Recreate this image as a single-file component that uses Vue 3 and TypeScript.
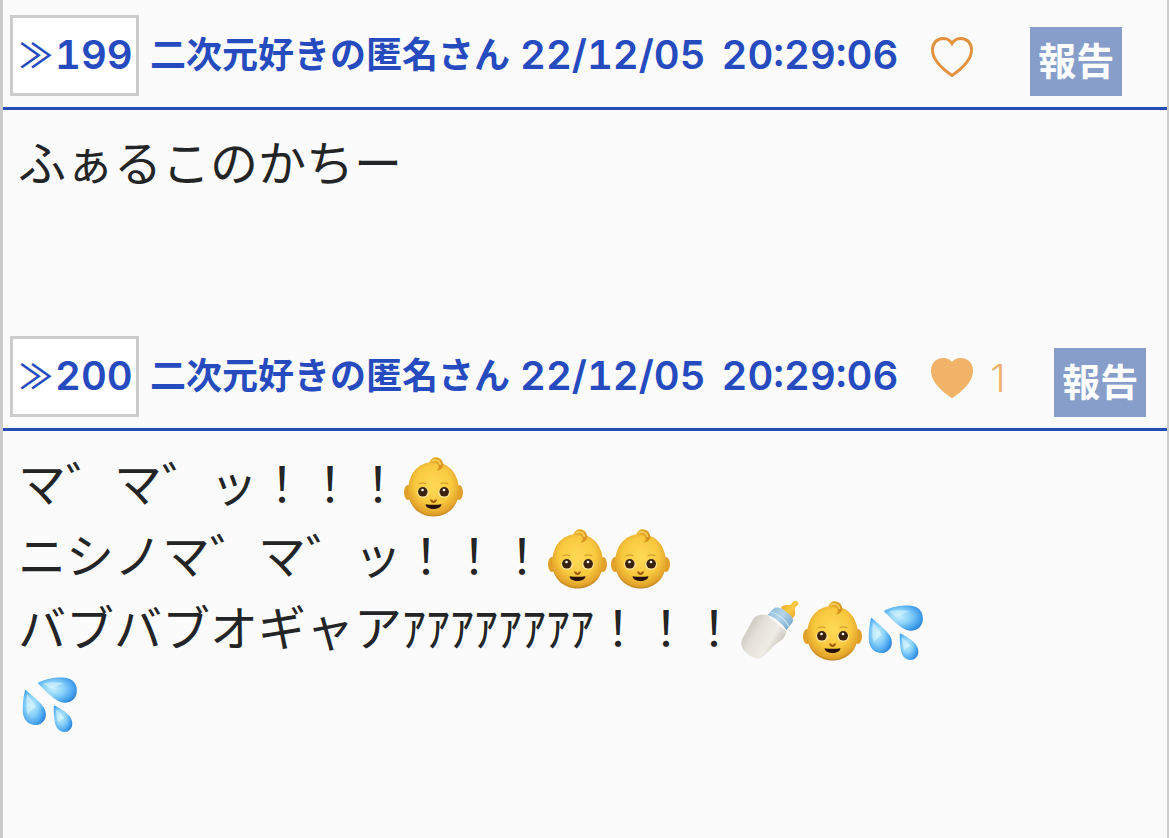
<script setup lang="ts">
import { reactive } from 'vue'

interface Post {
  id: number
  name: string
  day: string
  time: string
  likes: number
  lines: string[]
}

interface Token {
  text: string
  icon?: string
}

const posts = reactive<Post[]>([
  {
    id: 199,
    name: '二次元好きの匿名さん',
    day: '22/12/05',
    time: '20:29:06',
    likes: 0,
    lines: ['ふぁるこのかちー'],
  },
  {
    id: 200,
    name: '二次元好きの匿名さん',
    day: '22/12/05',
    time: '20:29:06',
    likes: 1,
    lines: [
      'マ゛マ゛ッ！！！👶',
      'ニシノマ゛マ゛ッ！！！👶👶',
      'バブバブオギャアｱｱｱｱｱｱｱｱ！！！🍼👶💦💦',
    ],
  },
])

const icons: Record<string, string> = {
  '👶': 'baby',
  '🍼': 'bottle',
  '💦': 'drops',
}

function tokens(line: string): Token[] {
  return line
    .split(/(👶|🍼|💦)/u)
    .filter((part) => part !== '')
    .map((part) => ({ text: part, icon: icons[part] }))
}

function like(post: Post) {
  post.likes += 1
}
</script>

<template>
  <main class="thread">
    <svg class="defs" aria-hidden="true">
      <defs>
        <radialGradient id="skin" cx="0.5" cy="0.42" r="0.6">
          <stop offset="0" stop-color="#ffda55" />
          <stop offset="0.6" stop-color="#f8c93f" />
          <stop offset="0.88" stop-color="#e3a42b" />
          <stop offset="1" stop-color="#b8781e" />
        </radialGradient>
        <linearGradient id="curl" x1="0" y1="0" x2="1" y2="1">
          <stop offset="0" stop-color="#edb52f" />
          <stop offset="1" stop-color="#d18a1d" />
        </linearGradient>
        <linearGradient id="milk" x1="0" y1="0.2" x2="1" y2="0.8">
          <stop offset="0" stop-color="#bfbab0" />
          <stop offset="0.35" stop-color="#e4e0d8" />
          <stop offset="0.65" stop-color="#efece6" />
          <stop offset="1" stop-color="#b3ada2" />
        </linearGradient>
        <linearGradient id="collar" x1="0" y1="0" x2="1" y2="0.8">
          <stop offset="0" stop-color="#83b4d5" />
          <stop offset="0.5" stop-color="#b4d5e8" />
          <stop offset="1" stop-color="#74a5c9" />
        </linearGradient>
        <linearGradient id="teat" x1="0" y1="0" x2="1" y2="1">
          <stop offset="0" stop-color="#e8a01c" />
          <stop offset="0.5" stop-color="#fccb45" />
          <stop offset="1" stop-color="#de9218" />
        </linearGradient>
        <radialGradient id="water" cx="0.4" cy="0.45" r="0.65">
          <stop offset="0" stop-color="#c5effd" />
          <stop offset="0.45" stop-color="#86cff9" />
          <stop offset="0.8" stop-color="#48a4ef" />
          <stop offset="1" stop-color="#2c83d2" />
        </radialGradient>
      </defs>

      <symbol id="baby" viewBox="0 0 63 63">
        <ellipse cx="6" cy="36.500" rx="4" ry="7.500" fill="#e0a02a" />
        <ellipse cx="57" cy="36.500" rx="4" ry="7.500" fill="#e0a02a" />
        <path d="M31.500 6C47 6 56.500 18 57 34C57 50 46 60.500 31.500 60.500S6 50 6 34C6.500 18 16 6 31.500 6Z" fill="url(#skin)" />
        <path d="M27.500 7C28.500 .5 36-.5 39.500 4C43.500 9 40 14.500 34.500 14.500C37 12.500 37.500 10 35.500 8C33.500 6.200 30 6 27.500 7Z" fill="url(#curl)" />
        <path d="M29.500 5.200C33 3 38 4.500 38.500 9" fill="none" stroke="#f8cf59" stroke-width="1.600" />
        <path d="M17 27.600Q20 26 24 27.400M39 27.400Q43 26 46 27.600" fill="none" stroke="#d09229" stroke-width="1" stroke-linecap="round" />
        <ellipse cx="21" cy="36.500" rx="6" ry="5.400" fill="#fde596" />
        <ellipse cx="42" cy="36.500" rx="6" ry="5.400" fill="#fde596" />
        <circle cx="20.800" cy="35.800" r="4.800" fill="#3b220c" />
        <circle cx="42.200" cy="35.800" r="4.800" fill="#3b220c" />
        <circle cx="20.500" cy="34" r="1.300" fill="#fff" />
        <circle cx="42" cy="34" r="1.300" fill="#fff" />
        <path d="M27.800 42.800Q29 44 30 43.600Q31.500 46 33 43.600Q34 44 35.200 42.800Q34.500 47 31.500 47T27.800 42.800Z" fill="#a05b10" />
        <path d="M23.500 48.200Q31.500 49.500 39.500 48.200C39 54.500 24 54.500 23.500 48.200Z" fill="#241003" />
      </symbol>

      <symbol id="bottle" viewBox="0 0 63 63">
        <path d="M43 8C45 4 50 5.500 52 5C54 4 54.500 1 57.500.8C60.500 1 61.500 4.500 59 6C56.500 7 56.500 9 57 12C57.500 16 55 18 53 19.500Z" fill="url(#teat)" />
        <path d="M29 15C21 14 17 15.500 14 21C11 27 8 33 5 37.500C2 43 3 48 8 52.500C13 57.500 19 60 24 57.500C29 54 32 49 38 44C44 40 48 37 48 31Z" fill="url(#milk)" />
        <path d="M35 9C39 6 43 8 48 11.500C53 15.500 57 19 54 23L48.500 30C44 23 36 17 29.500 15Z" fill="url(#collar)" />
        <path d="M32.500 12C39 13 47 19 51 26.500" fill="none" stroke="#cde5f3" stroke-width="1.200" />
      </symbol>

      <symbol id="drops" viewBox="0 0 63 63">
        <path d="M20.500 10.500C29 6 40 5 47 5.700C55 6.500 59.500 12 58.800 20C58 27 53 31 46 30.700C37 30 28 19 20.800 12.500Q19.500 11 20.500 10.500Z" fill="url(#water)" />
        <path d="M7.800 18C14 23 21 29 25.500 35C30 42 28 50 20.500 52.700C12 54.500 5.500 49 4.800 40C4.500 32 5.500 25 6.800 18.700Q7 17.500 7.800 18Z" fill="url(#water)" />
        <path d="M36.500 33.500C42 36 48 40 51.500 44C56 50 55 57 49.500 59.500C43 61.500 38 57 36.800 50C35.700 44 35.500 38 35.800 34.300Q35.800 33.200 36.500 33.500Z" fill="url(#water)" />
        <path d="M25 11.500Q36 9 46 11.500Q38 14 33 17Q29 15 25 11.500ZM9 22Q15 29 18 35Q14 36 10 43Q7 34 9 22ZM38 37Q43 41 46 46Q43 47 40 51Q38 44 38 37Z" fill="#e5faff" opacity=".5" />
      </symbol>
    </svg>

    <article v-for="post in posts" :id="`res${post.id}`" :key="post.id" class="post">
      <header class="head">
        <a class="number" :href="`#res${post.id}`"><span class="arrow">≫</span>{{ post.id }}</a>
        <span class="name">{{ post.name }}</span>
        <time class="date"><span>{{ post.day }}</span> <span>{{ post.time }}</span></time>
        <button class="like" type="button" aria-label="いいね" @click="like(post)">
          <svg class="heart" :class="{ filled: post.likes > 0 }" viewBox="0 0 44 42" aria-hidden="true">
            <path d="M22 39.500C14 34 2.500 25 2.500 14C2.500 7 7 2.500 13 2.500C17 2.500 20 4 22 7.500C24 4 27 2.500 31 2.500C37 2.500 41.500 7 41.500 14C41.500 25 30 34 22 39.500Z" />
          </svg>
          <span v-if="post.likes > 0" class="count">{{ post.likes }}</span>
        </button>
        <button class="report" type="button">報告</button>
      </header>
      <div class="body">
        <p v-for="(line, i) in post.lines" :key="i" class="line"><template v-for="(token, j) in tokens(line)" :key="j"><svg v-if="token.icon" class="emoji" role="img" :aria-label="token.text"><use :href="`#${token.icon}`" /></svg><template v-else>{{ token.text }}</template></template></p>
      </div>
    </article>
  </main>
</template>

<style>
body {
  margin: 0;
  background: #fbfbfb;
}
</style>

<style scoped>
.thread {
  box-sizing: border-box;
  min-height: 100vh;
  border-left: 3px solid #ccc;
  border-right: 2px solid #ccc;
  background: #fbfbfb;
  color: #222426;
  font-family: "Noto Sans CJK JP", sans-serif;
}

.defs {
  position: absolute;
  width: 0;
  height: 0;
}

.head {
  display: flex;
  align-items: flex-start;
  height: 92px;
  padding: 15px 7px 0;
  border-bottom: 3px solid #284db6;
  color: #254bbe;
  font-size: 36px;
  font-weight: 700;
  line-height: 74px;
  white-space: nowrap;
}

.number {
  display: flex;
  box-sizing: border-box;
  width: 129px;
  height: 81px;
  padding-left: 6px;
  border: 3px solid #ccc;
  background: #fff;
  color: inherit;
  font: 600 40px/74px Inter, sans-serif;
  font-feature-settings: "tnum";
  text-decoration: none;
}

.arrow {
  width: 36px;
  font: 500 34px/72px "Noto Sans CJK JP", sans-serif;
}

.name {
  margin-left: 11px;
}

.date {
  display: flex;
  gap: 16px;
  margin-left: 10px;
  font: 600 40px/80px Inter, sans-serif;
  font-feature-settings: "tnum";
}

button {
  padding: 0;
  border: 0;
  cursor: pointer;
}

.like {
  display: flex;
  align-items: center;
  gap: 16px;
  height: 84px;
  margin-left: 32px;
  background: none;
}

.heart {
  width: 44px;
  height: 42px;
  fill: none;
  stroke: #e39340;
  stroke-width: 3;
}

.heart.filled {
  fill: #f0b367;
  stroke: #f0b367;
}

.count {
  width: 8px;
  color: #f0b06a;
  font: 300 38px/40px Inter, sans-serif;
}

.report {
  box-sizing: border-box;
  width: 92px;
  height: 69px;
  margin: 12px 0 0 56px;
  padding-bottom: 6px;
  background: #869ec9;
  color: #fff;
  font: 700 38px/63px "Noto Sans CJK JP", sans-serif;
}

.body {
  min-height: 179px;
  padding: 14px 18% 18px 15px;
}

.line {
  margin: 0;
  font-size: 48px;
  line-height: 72px;
}

.emoji {
  width: 63px;
  height: 63px;
  margin-bottom: -12px;
  vertical-align: -5px;
}
</style>
